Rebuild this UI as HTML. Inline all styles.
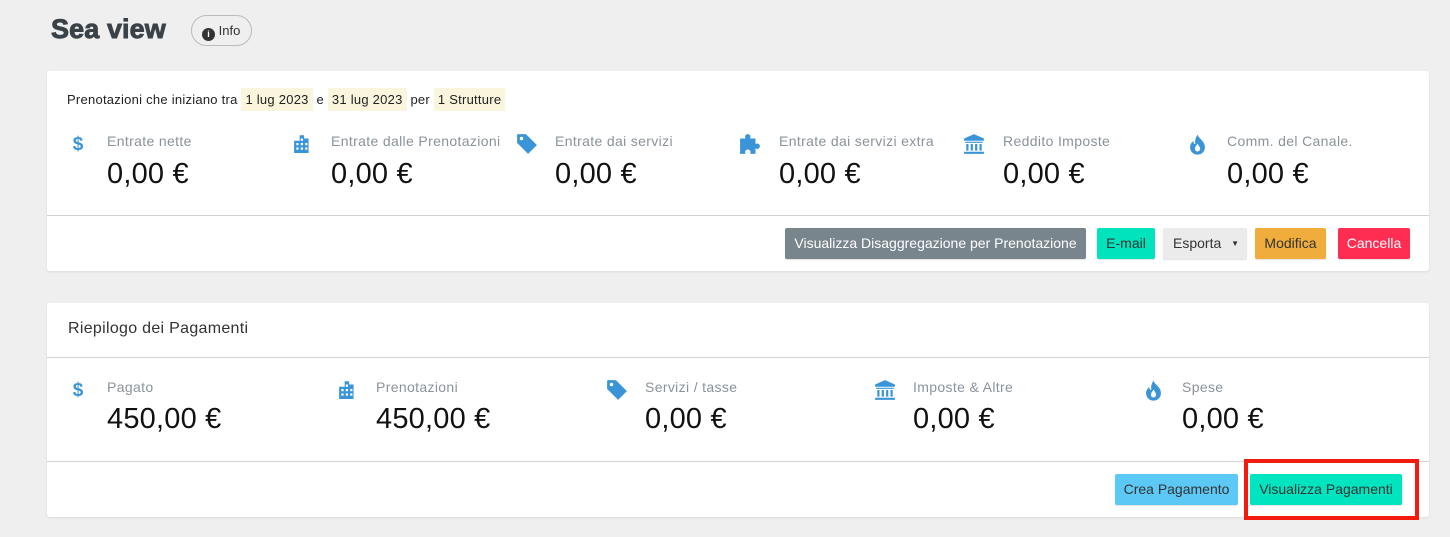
<!DOCTYPE html>
<html><head><meta charset="utf-8"><style>
*{margin:0;padding:0;box-sizing:border-box}
body{width:1450px;height:537px;background:#efefef;font-family:"Liberation Sans",sans-serif;position:relative;overflow:hidden}
.a{position:absolute;white-space:nowrap}
.card{position:absolute;left:47px;width:1382px;background:#fff;border-radius:3px;box-shadow:0 1px 2px rgba(0,0,0,.08)}
.hr{position:absolute;left:0;right:0;height:1px;background:#d2d2d2}
.lbl{position:absolute;font-size:14px;letter-spacing:0.35px;color:#8a939b;white-space:nowrap}
.val{position:absolute;font-size:29px;letter-spacing:0.2px;color:#111;white-space:nowrap}
.ic{position:absolute}
.hl{background:#fbf5dd;padding:4px 4px;color:#222}
.btn{position:absolute;height:31px;font-size:14px;line-height:31px;text-align:center;border-radius:2px;box-shadow:0 1px 1px rgba(0,0,0,.12)}
</style></head><body>
<div class="a" style="left:51px;top:14px;font-size:27px;font-weight:bold;color:#3a4248;letter-spacing:0.1px;-webkit-text-stroke:0.9px #3a4248">Sea view</div>
<div class="a" style="left:191px;top:15px;width:61px;height:31px;border:1px solid #bbb;border-radius:16px;font-size:13px;line-height:29px;color:#333;padding-left:10px">
<span style="display:inline-block;width:13px;height:13px;border-radius:50%;background:#333;color:#fff;font-size:9px;line-height:13px;text-align:center;font-weight:bold;vertical-align:-2px">i</span> Info</div>

<div class="card" style="top:71px;height:200px">
<div class="a" style="left:20px;top:18px;font-size:13px;letter-spacing:0.25px;color:#222;line-height:22px">Prenotazioni che iniziano tra <span class="hl">1 lug 2023</span> e <span class="hl">31 lug 2023</span> per <span class="hl">1 Strutture</span></div>
<div class="hr" style="top:144px"></div>
<div class="btn" style="left:738px;top:157px;width:301px;background:#78858d;color:#fff">Visualizza Disaggregazione per Prenotazione</div>
<div class="btn" style="left:1050px;top:157px;width:58px;background:#00e3bd;color:#333">E-mail</div>
<div class="btn" style="left:1116px;top:157px;width:84px;background:#ebebeb;color:#333;text-align:left;padding-left:10px">Esporta <span style="font-size:8px;margin-left:6px;vertical-align:2px">▼</span></div>
<div class="btn" style="left:1208px;top:157px;width:71px;background:#f0ad3c;color:#333">Modifica</div>
<div class="btn" style="left:1291px;top:157px;width:72px;background:#ff2d52;color:#fff">Cancella</div>
</div>

<div class="card" style="top:303px;height:214px">
<div class="a" style="left:21px;top:17px;font-size:16px;letter-spacing:0.3px;color:#333">Riepilogo dei Pagamenti</div>
<div class="hr" style="top:54px"></div>
<div class="hr" style="top:158px"></div>
<div class="btn" style="left:1068px;top:171px;width:123px;background:#5bc8f5;color:#333">Crea Pagamento</div>
<div class="btn" style="left:1203px;top:171px;width:152px;background:#00e5bf;color:#333">Visualizza Pagamenti</div>
</div>
<div class="a" style="left:1244px;top:459px;width:175px;height:61px;border:4px solid #f21c0e"></div>

<svg width="0" height="0" style="position:absolute">
<defs>
<symbol id="dol" viewBox="0 0 12 20"><text x="6" y="17" text-anchor="middle" font-family="Liberation Sans" font-weight="bold" font-size="19" fill="#3a95d8">$</text></symbol>
<symbol id="bld" viewBox="0 0 18 18"><path fill="#3a95d8" d="M6 2h4v3h4v13H1V7h5z"/><g fill="#fff"><rect x="3" y="9" width="2" height="2"/><rect x="7" y="9" width="2" height="2"/><rect x="11" y="9" width="2" height="2"/><rect x="3" y="13" width="2" height="2"/><rect x="7" y="13" width="2" height="2"/><rect x="11" y="13" width="2" height="2"/><rect x="7" y="5" width="2" height="2"/></g></symbol>
<symbol id="tag" viewBox="0 0 20 20"><path fill="#3a95d8" d="M1 2q0-1 1-1h7l10 10-8 8L1 9z"/><circle cx="5" cy="5" r="1.6" fill="#fff"/></symbol>
<symbol id="puz" viewBox="0 0 20 20"><path fill="#3a95d8" d="M1 5h5a2.5 2.5 0 1 1 4 0h5v5a2.5 2.5 0 1 1 0 4v5h-5a2.5 2.5 0 1 0-4 0H1z"/></symbol>
<symbol id="bnk" viewBox="0 0 20 20"><path fill="#3a95d8" d="M10 1l9 4v2H1V5zM2 8h16v1H2zM3 10h2v6H3zM7 10h2v6H7zM11 10h2v6h-2zM15 10h2v6h-2zM1 17h18v2H1z"/></symbol>
<symbol id="fir" viewBox="0 0 16 20"><path fill="#3a95d8" d="M8 1c1 4 7 6 7 12a7 7 0 0 1-14 0c0-3 2-5 3-6 0 2 1 3 2 3-1-4 1-7 2-9zM8 17a2.5 2.5 0 0 0 2.5-2.5c0-2-2-3-2-5-1 1-3 3-3 5A2.5 2.5 0 0 0 8 17z"/></symbol>
</defs></svg>

<svg class="ic" style="left:72px;top:133px" width="12" height="20"><use href="#dol"/></svg>
<div class="lbl" style="left:107px;top:133px">Entrate nette</div><div class="val" style="left:107px;top:158px">0,00 €</div>
<svg class="ic" style="left:293px;top:133px" width="20" height="20"><use href="#bld"/></svg>
<div class="lbl" style="left:331px;top:133px">Entrate dalle Prenotazioni</div><div class="val" style="left:331px;top:158px">0,00 €</div>
<svg class="ic" style="left:516px;top:133px" width="22" height="22"><use href="#tag"/></svg>
<div class="lbl" style="left:555px;top:133px">Entrate dai servizi</div><div class="val" style="left:555px;top:158px">0,00 €</div>
<svg class="ic" style="left:739px;top:133px" width="22" height="22"><use href="#puz"/></svg>
<div class="lbl" style="left:779px;top:133px">Entrate dai servizi extra</div><div class="val" style="left:779px;top:158px">0,00 €</div>
<svg class="ic" style="left:963px;top:133px" width="22" height="22"><use href="#bnk"/></svg>
<div class="lbl" style="left:1003px;top:133px">Reddito Imposte</div><div class="val" style="left:1003px;top:158px">0,00 €</div>
<svg class="ic" style="left:1189px;top:133px" width="17" height="22"><use href="#fir"/></svg>
<div class="lbl" style="left:1227px;top:133px">Comm. del Canale.</div><div class="val" style="left:1227px;top:158px">0,00 €</div>

<svg class="ic" style="left:72px;top:379px" width="12" height="20"><use href="#dol"/></svg>
<div class="lbl" style="left:107px;top:379px">Pagato</div><div class="val" style="left:107px;top:403px">450,00 €</div>
<svg class="ic" style="left:338px;top:379px" width="20" height="20"><use href="#bld"/></svg>
<div class="lbl" style="left:376px;top:379px">Prenotazioni</div><div class="val" style="left:376px;top:403px">450,00 €</div>
<svg class="ic" style="left:606px;top:379px" width="22" height="22"><use href="#tag"/></svg>
<div class="lbl" style="left:645px;top:379px">Servizi / tasse</div><div class="val" style="left:645px;top:403px">0,00 €</div>
<svg class="ic" style="left:874px;top:379px" width="22" height="22"><use href="#bnk"/></svg>
<div class="lbl" style="left:913px;top:379px">Imposte &amp; Altre</div><div class="val" style="left:913px;top:403px">0,00 €</div>
<svg class="ic" style="left:1145px;top:379px" width="17" height="22"><use href="#fir"/></svg>
<div class="lbl" style="left:1182px;top:379px">Spese</div><div class="val" style="left:1182px;top:403px">0,00 €</div>
</body></html>
